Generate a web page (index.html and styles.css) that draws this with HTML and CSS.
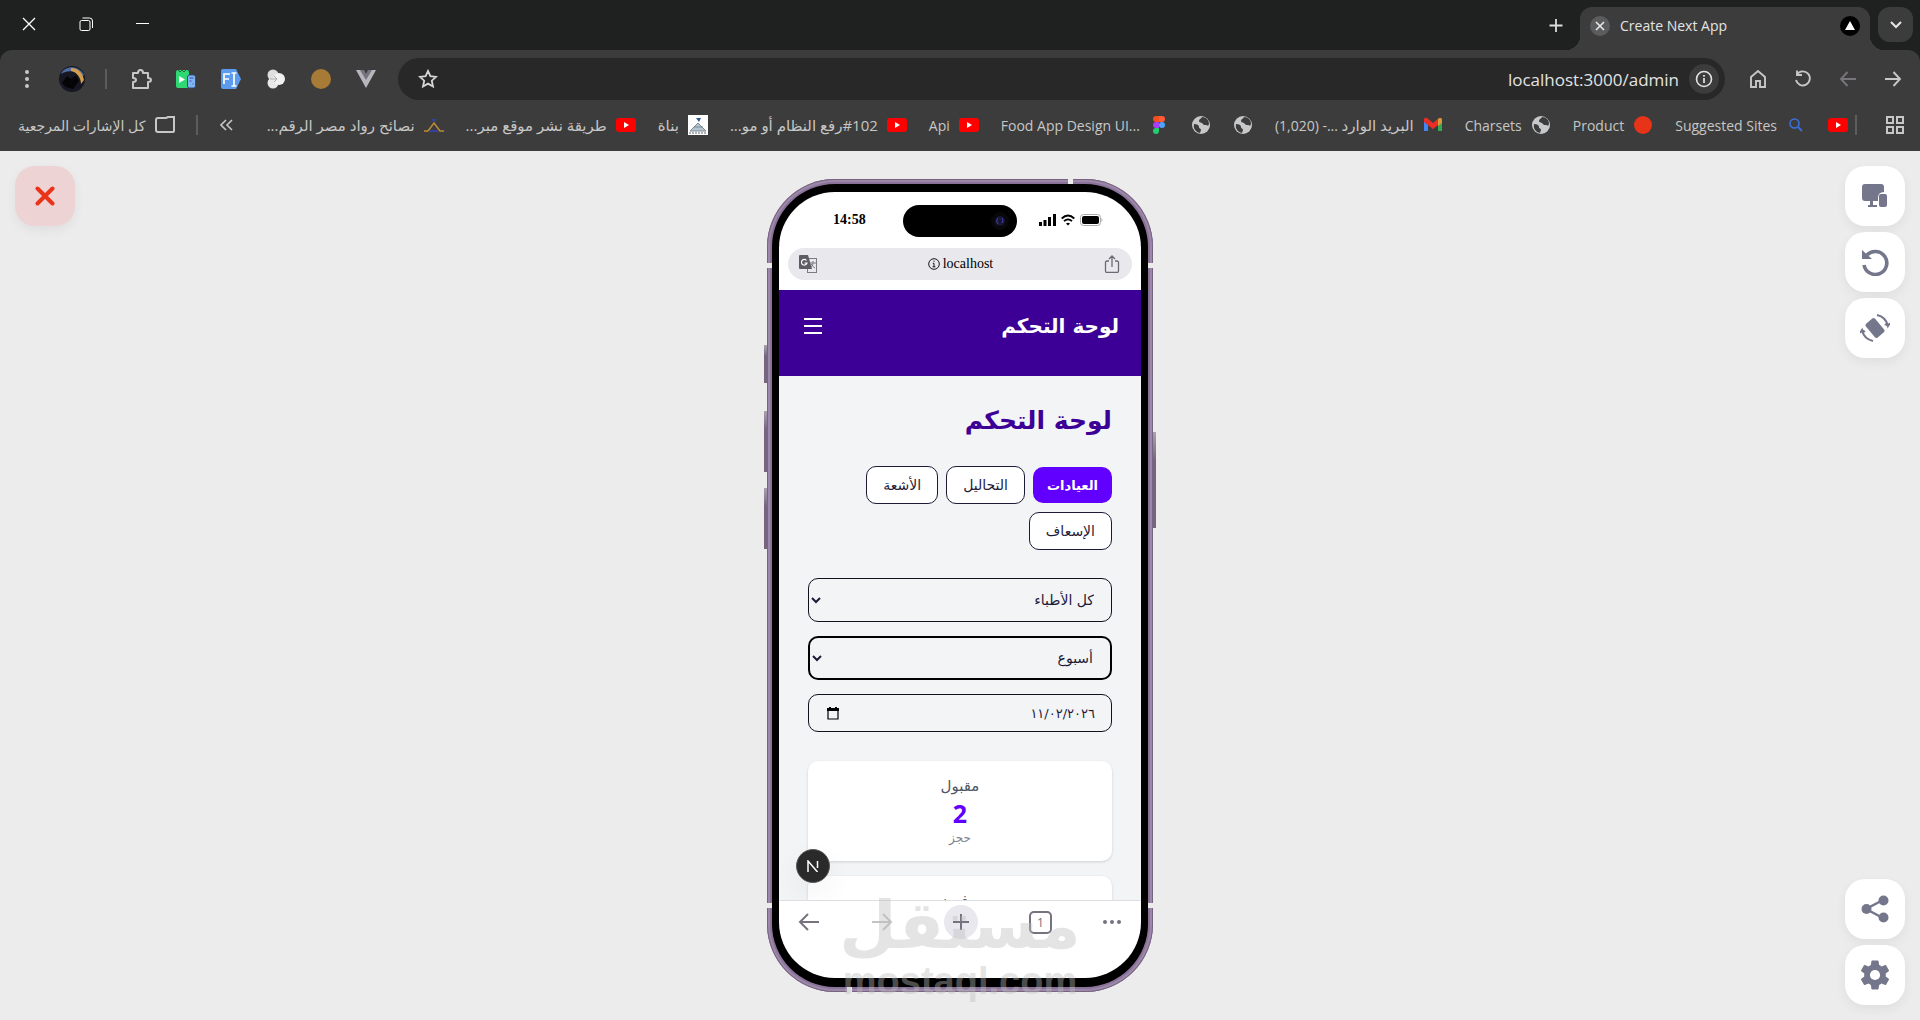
FILE: index.html
```html
<!DOCTYPE html>
<html lang="ar">
<head>
    <meta charset="UTF-8">
    <meta name="viewport" content="width=device-width, initial-scale=1.0">
    <title>Create Next App</title>
    <link rel="stylesheet" href="styles.css">
</head>
<body>
    <svg class="defs" aria-hidden="true">
        <symbol id="youtube" viewBox="0 0 20 20">
            <rect x="0" y="3" width="20" height="14" rx="3" fill="#f00"/>
            <path d="M8 7l5 3-5 3z" fill="#fff"/>
        </symbol>
        <symbol id="globe" viewBox="0 0 20 20">
            <circle cx="10" cy="10" r="9" fill="#c7c8ca"/>
            <path d="M3 9c3 0 5 1 5 3s2 1 2 3l-1 3C5 17 2 14 3 9zM11 2c-1 2-3 2-3 4s3 1 4 3 4 0 5 2l1-2c0-4-3-7-7-7z" fill="#3c3c3c"/>
        </symbol>
    </svg>

    <header class="browser">
        <div class="tabstrip">
            <div class="window-buttons">
                <button aria-label="إغلاق"><svg width="14" height="14" viewBox="0 0 14 14"><path d="M1 1l12 12M13 1L1 13" stroke="#fff" stroke-width="1.3"/></svg></button>
                <button aria-label="استعادة"><svg width="14" height="14" viewBox="0 0 14 14" fill="none" stroke="#fff"><rect x="1" y="3.500" width="10" height="10" rx="1.500"/><path d="M3.500 1h7a3 3 0 0 1 3 3v7"/></svg></button>
                <button aria-label="تصغير"><svg width="14" height="14" viewBox="0 0 14 14"><path d="M0 6.500h13" stroke="#fff"/></svg></button>
            </div>
            <div class="tabs">
                <button class="new-tab" aria-label="علامة تبويب جديدة"><svg width="14" height="14" viewBox="0 0 14 14"><path d="M7 1v13M.5 7.500h13" stroke="#dcdcdc" stroke-width="1.800"/></svg></button>
                <div class="tab">
                    <button class="tab-close" aria-label="إغلاق علامة التبويب"><svg width="10" height="10" viewBox="0 0 10 10"><path d="M1 1l8 8M9 1L1 9" stroke="#e6e6e6" stroke-width="1.700"/></svg></button>
                    <span class="tab-title">Create Next App</span>
                    <svg width="20" height="20" viewBox="0 0 20 20"><circle cx="10" cy="10" r="10" fill="#000"/><path d="M10 5l5 9H5z" fill="#fff"/></svg>
                </div>
                <button class="tab-search" aria-label="البحث في علامات التبويب"><svg width="12" height="8" viewBox="0 0 12 8"><path d="M1 1l5 5 5-5" fill="none" stroke="#e6e6e6" stroke-width="2"/></svg></button>
            </div>
        </div>

        <div class="toolbar">
            <div class="extensions">
                <button aria-label="القائمة"><svg width="20" height="20" viewBox="0 0 20 20" fill="#c7c7c7"><circle cx="10" cy="3" r="2"/><circle cx="10" cy="10" r="2"/><circle cx="10" cy="17" r="2"/></svg></button>
                <button aria-label="الملف الشخصي"><svg width="26" height="26" viewBox="0 0 26 26"><circle cx="13" cy="13" r="13" fill="#161722"/><path d="M2 8C6-1 20-1 25 9l-3 3C18 5 10 3 2 8z" fill="#4d6b9c"/><path d="M12 2c9 0 12 7 13 12l-3 4C22 12 18 6 12 5z" fill="#d59c4c"/><path d="M3 17l5-7 4 3 5-4 3 6-6 8-7-2z" fill="#050508"/></svg></button>
                <span class="divider"></span>
                <button aria-label="الإضافات"><svg width="22" height="22" viewBox="0 0 22 22"><path d="M3 5h5c0-4 5-4 5 0h5v5c4 0 4 4 0 4v6H3v-6c4 0 4-4 0-4z" fill="none" stroke="#c7c7c7" stroke-width="2" stroke-linejoin="round"/></svg></button>
                <button aria-label="مشغل الأجهزة"><svg width="22" height="22" viewBox="0 0 22 22"><rect x="1" y="2" width="13" height="18" rx="2" fill="#2fd873"/><path d="M3 2l2 2 2-2 2 2 2-2" fill="none" stroke="#1b6b41"/><path d="M4 8l6 3.500L4 15z" fill="#fff"/><rect x="12.500" y="7" width="8" height="13" rx="2" fill="#7fb4f5" stroke="#2c4b79"/><path d="M14.500 10h4M14.500 13h2m1 3h1" stroke="#4b4b9c"/></svg></button>
                <button aria-label="أداة النماذج"><svg width="22" height="22" viewBox="0 0 22 22"><path d="M3 1h13l5 10-5 10H3q-2 0-2-2V3q0-2 2-2z" fill="#5b9cf0"/><path d="M4 16V6h6M4 11h5M11.500 5h5M11.500 18h5M14 5v13" fill="none" stroke="#fff" stroke-width="1.700"/></svg></button>
                <button aria-label="ثلاث دوائر"><svg width="22" height="22" viewBox="0 0 22 22"><circle cx="8" cy="7" r="5.500" fill="#dedede"/><circle cx="8" cy="15" r="5.500" fill="#e8e8e8"/><circle cx="14" cy="11" r="6" fill="#f1f1f1"/><path d="M5 11h7M9 8l3 3-3 3" stroke="#aaa" fill="none"/></svg></button>
                <button aria-label="ملف تعريف الارتباط"><svg width="22" height="22" viewBox="0 0 22 22"><circle cx="11" cy="11" r="10" fill="#a77a35"/></svg></button>
                <button aria-label="أدوات Vue"><svg width="22" height="22" viewBox="0 0 22 22"><path d="M1 2h7l3 5 3-5h7L11 20z" fill="#b9b5bd"/><path d="M5 2h4l2 4 2-4h4l-6 10z" fill="#77737e"/></svg></button>
            </div>
            <div class="omnibox">
                <button class="star" aria-label="إضافة إشارة"><svg width="20" height="20" viewBox="0 0 20 20"><path d="M10 2l2.400 5.200 5.600.7-4.200 3.800 1.200 5.800-5-2.900-5 2.900 1.200-5.800L2 7.900l5.600-.7z" fill="none" stroke="#d6d6d6" stroke-width="1.800"/></svg></button>
                <input type="text" class="url" aria-label="العنوان" value="localhost:3000/admin">
                <button class="site-info" aria-label="معلومات الموقع"><svg width="18" height="18" viewBox="0 0 18 18"><circle cx="9" cy="9" r="7.500" fill="none" stroke="#e3e3e3" stroke-width="1.600"/><path d="M9 8v5M9 5v1.700" stroke="#e3e3e3" stroke-width="1.700"/></svg></button>
            </div>
            <div class="navigation">
                <button aria-label="الصفحة الرئيسية"><svg width="20" height="20" viewBox="0 0 20 20"><path d="M3 8l7-6 7 6v10h-5v-6H8v6H3z" fill="none" stroke="#c7c7c7" stroke-width="1.900"/></svg></button>
                <button aria-label="إعادة التحميل"><svg width="20" height="20" viewBox="0 0 20 20" fill="none" stroke="#c7c7c7" stroke-width="1.900"><path d="M4 5.500a7 7 0 1 1-1 5.500"/><path d="M4 1.500V6h5"/></svg></button>
                <button aria-label="التقدم"><svg width="20" height="20" viewBox="0 0 20 20"><path d="M18 10H3M9.500 3L3 10l6.500 7" fill="none" stroke="#77747b" stroke-width="1.900"/></svg></button>
                <button aria-label="الرجوع"><svg width="20" height="20" viewBox="0 0 20 20"><path d="M2 10h15M10.500 3l6.500 7-6.500 7" fill="none" stroke="#c7c7c7" stroke-width="1.900"/></svg></button>
            </div>
        </div>

        <nav class="bookmarks">
            <a href="#" class="bookmark all-bookmarks"><span dir="rtl">كل الإشارات المرجعية</span><svg width="22" height="18" viewBox="0 0 22 18"><path d="M2 4q0-2 2-2h8l2-1h6v14q0 1-2 1H4q-2 0-2-2z" fill="none" stroke="#c7c7c7" stroke-width="2"/></svg></a>
            <span class="divider"></span>
            <button class="more" aria-label="المزيد"><svg width="14" height="12" viewBox="0 0 14 12"><path d="M6 1L1 6l5 5M12 1L7 6l5 5" fill="none" stroke="#c7c7c7" stroke-width="1.600"/></svg></button>
            <div class="bookmark-list">
                <a href="#" class="bookmark"><span dir="rtl">نصائح رواد مصر الرقم...</span><svg width="20" height="20" viewBox="0 0 20 20"><path d="M0 16h4l6-8 6 8h4" fill="none" stroke="#b98a35" stroke-width="1.600"/><path d="M6 16h8M8 5h4" stroke="#3440a5" stroke-width="2"/></svg></a>
                <a href="#" class="bookmark"><span dir="rtl">طريقة نشر موقع مبر...</span><svg width="20" height="20"><use href="#youtube"/></svg></a>
                <a href="#" class="bookmark"><span dir="rtl">بناة</span><svg width="20" height="20" viewBox="0 0 20 20"><path d="M0 0h20v20H0z" fill="#fff"/><path d="M8 3h5l-2 4z" fill="#34579b"/><path d="M10 8L2 16h16zM6 12h9" fill="#b7c4cd" stroke="#7b8c99"/><path d="M1 18h18" stroke="#666" stroke-dasharray="2 1"/></svg></a>
                <a href="#" class="bookmark"><span dir="rtl">‎#102رفع النظام أو مو...</span><svg width="20" height="20"><use href="#youtube"/></svg></a>
                <a href="#" class="bookmark"><span>Api</span><svg width="20" height="20"><use href="#youtube"/></svg></a>
                <a href="#" class="bookmark"><span>Food App Design UI...</span><svg width="20" height="20" viewBox="0 0 20 20"><path d="M10 1H7a3 3 0 0 0 0 6h3z" fill="#f24e1e"/><path d="M10 1h3a3 3 0 0 1 0 6h-3z" fill="#ff5b37"/><path d="M10 7H7a3 3 0 0 0 0 6h3z" fill="#a93df5"/><circle cx="13" cy="10" r="3" fill="#4aa5f5"/><path d="M10 13H7a3 3 0 1 0 3 3z" fill="#24cb71"/></svg></a>
                <a href="#" class="bookmark" aria-label="موقع"><svg width="20" height="20"><use href="#globe"/></svg></a>
                <a href="#" class="bookmark" aria-label="موقع"><svg width="20" height="20"><use href="#globe"/></svg></a>
                <a href="#" class="bookmark"><span dir="ltr">(1,020) -... <bdi>البريد الوارد</bdi></span><svg width="20" height="20" viewBox="0 0 20 20"><path d="M1 4v12h4V8z" fill="#4285f4"/><path d="M19 4v12h-4V8z" fill="#34a853"/><path d="M1 4c1-2 3-1 3-1l6 5 6-5s2-1 3 1v3l-9 7-9-7z" fill="#ea2d25"/><path d="M15 4c2-2 4-1 4 1v3l-4 3z" fill="#d29b3c"/></svg></a>
                <a href="#" class="bookmark"><span>Charsets</span><svg width="20" height="20"><use href="#globe"/></svg></a>
                <a href="#" class="bookmark"><span>Product</span><svg width="20" height="20" viewBox="0 0 20 20"><circle cx="10" cy="10" r="9" fill="#e73419"/></svg></a>
                <a href="#" class="bookmark"><span>Suggested Sites</span><svg width="20" height="20" viewBox="0 0 20 20"><circle cx="8.500" cy="8.500" r="4.500" fill="none" stroke="#3b70dc" stroke-width="1.600"/><path d="M12 12l4 4" stroke="#3b70dc" stroke-width="1.800"/></svg></a>
                <a href="#" class="bookmark" aria-label="YouTube"><svg width="20" height="20"><use href="#youtube"/></svg></a>
            </div>
            <span class="divider"></span>
            <button class="apps" aria-label="التطبيقات"><svg width="18" height="18" viewBox="0 0 18 18" fill="none" stroke="#c7c7c7" stroke-width="2"><rect x="1" y="1" width="6" height="6"/><rect x="11" y="1" width="6" height="6"/><rect x="1" y="11" width="6" height="6"/><rect x="11" y="11" width="6" height="6"/></svg></button>
        </nav>
    </header>

    <main class="stage">
        <div class="tools">
            <button class="tool tool-close" aria-label="إغلاق المحاكي"><svg width="20" height="20" viewBox="0 0 20 20"><path d="M2.500 2.500l15 15M17.500 2.500l-15 15" stroke="#e93419" stroke-width="4" stroke-linecap="round"/></svg></button>
        </div>

        <div class="phone">
            <span class="side-key key-action"></span>
            <span class="side-key key-up"></span>
            <span class="side-key key-down"></span>
            <span class="side-key key-power"></span>
            <span class="antenna antenna-top"></span>
            <span class="antenna antenna-upper-left"></span>
            <span class="antenna antenna-upper-right"></span>
            <span class="antenna antenna-lower-left"></span>
            <span class="antenna antenna-lower-right"></span>
            <span class="antenna antenna-bottom"></span>
            <div class="bezel">
                <div class="screen">
                    <div class="status-bar">
                        <span class="clock">14:58</span>
                        <span class="island"><svg width="20" height="20" viewBox="0 0 20 20"><circle cx="10" cy="10" r="9" fill="#08080b"/><circle cx="10" cy="10" r="5" fill="#171637"/><path d="M8 7q-3 3 0 6M12 7q2 2 0 5" stroke="#4440a0" fill="none"/></svg></span>
                        <span class="signals">
                            <svg width="17" height="12" viewBox="0 0 17 12"><path d="M0 8h3v4H0zM4.500 6h3v6h-3zM9 3h3v9H9zM14 0h3v12h-3z"/></svg>
                            <svg width="14" height="12" viewBox="0 0 14 12" fill="none" stroke="#000" stroke-width="1.800"><path d="M.7 4.500q6.300-6 12.600 0M3 7.200q4-3.600 8 0"/><path d="M5 9.500q2-1.500 4 0L7 11.500z" fill="#000" stroke="none"/></svg>
                            <svg width="23" height="12" viewBox="0 0 23 12"><rect x=".5" y=".5" width="20" height="11" rx="3" fill="none" stroke="#aaa"/><rect x="2" y="2" width="17" height="8" rx="2"/><path d="M21.500 4q2 2 0 4z" fill="#aaa"/></svg>
                        </span>
                    </div>
                    <div class="address">
                        <svg width="18" height="18" viewBox="0 0 18 18"><rect x="8.500" y="3.500" width="9" height="14" fill="none" stroke="#7c7a82"/><path d="M11 8h6M14 6v2c0 3-2 4-3 5m1-4q2 3 4 4" fill="none" stroke="#7c7a82"/><path d="M1 0h8l4 14H1q-1 0-1-1V1q0-1 1-1z" fill="#5d5b63"/><path d="M7.500 5.500A2.800 2.800 0 1 0 8 8H5.500" fill="none" stroke="#fff" stroke-width="1.200"/></svg>
                        <span class="host"><svg width="12" height="12" viewBox="0 0 12 12"><circle cx="6" cy="6" r="5.300" fill="none" stroke="#000" stroke-width=".9"/><path d="M6 2.600v1.200M4.800 5.300H6v3.500M4.600 8.800h2.800" fill="none" stroke="#000" stroke-width=".9"/></svg>localhost</span>
                        <svg width="16" height="18" viewBox="0 0 16 18" fill="none" stroke="#6d6a75" stroke-width="1.300"><path d="M5 6H3Q1.500 6 1.500 7.500V16q0 1.500 1.500 1.500h10q1.500 0 1.500-1.500V7.500Q14.500 6 13 6h-2M8 12V1M5 4l3-3 3 3"/></svg>
                    </div>

                    <div class="app" dir="rtl">
                        <div class="app-header">
                            <span class="brand">لوحة التحكم</span>
                            <button class="menu" aria-label="القائمة"><svg width="18" height="16" viewBox="0 0 18 16"><path d="M0 1h18M0 8h18M0 15h18" stroke="#fff" stroke-width="2"/></svg></button>
                        </div>
                        <div class="app-body">
                            <h1>لوحة التحكم</h1>
                            <div class="sections">
                                <button class="section active">العيادات</button>
                                <button class="section">التحاليل</button>
                                <button class="section">الأشعة</button>
                                <button class="section">الإسعاف</button>
                            </div>
                            <div class="filters">
                                <select aria-label="الطبيب">
                                    <option>كل الأطباء</option>
                                </select>
                                <select class="focused" aria-label="الفترة">
                                    <option>أسبوع</option>
                                </select>
                                <label class="date">
                                    <input type="text" aria-label="التاريخ" value="١١/٠٢/٢٠٢٦">
                                    <svg width="12" height="13" viewBox="0 0 12 13"><path d="M1 2h10v10H1z" fill="none" stroke="#000" stroke-width="1.200"/><path d="M0 1h12v3H0zM2 0h2v2H2zM8 0h2v2H8z"/></svg>
                                </label>
                            </div>
                            <div class="card">
                                <span class="card-label">مقبول</span>
                                <strong>2</strong>
                                <small>حجز</small>
                            </div>
                            <div class="card">
                                <span class="card-label">مرفوض</span>
                            </div>
                        </div>
                        <button class="next-badge" aria-label="Next.js"><svg width="12" height="12" viewBox="0 0 12 12"><path d="M1 12V1l9.500 11M10.500 1v7" fill="none" stroke="#fff" stroke-width="1.500"/></svg></button>
                    </div>

                    <div class="phone-nav">
                        <button aria-label="السابق"><svg width="22" height="18" viewBox="0 0 22 18"><path d="M21 9H2M10 1L2 9l8 8" fill="none" stroke="#77727f" stroke-width="2"/></svg></button>
                        <button aria-label="التالي"><svg width="22" height="18" viewBox="0 0 22 18"><path d="M1 9h19M12 1l8 8-8 8" fill="none" stroke="#c4c3c7" stroke-width="2"/></svg></button>
                        <button class="plus" aria-label="إضافة"><svg width="16" height="16" viewBox="0 0 16 16"><path d="M8 0v16M0 8h16" stroke="#77727f" stroke-width="2"/></svg></button>
                        <button aria-label="علامات التبويب"><span class="count">1</span></button>
                        <button aria-label="خيارات"><svg width="18" height="4" viewBox="0 0 18 4" fill="#77727f"><circle cx="2" cy="2" r="2"/><circle cx="9" cy="2" r="2"/><circle cx="16" cy="2" r="2"/></svg></button>
                    </div>
                </div>
            </div>
            <div class="watermark">
                <span class="watermark-name">مستقل</span>
                <span class="watermark-site">mostaql.com</span>
            </div>
        </div>

        <div class="tools">
            <button class="tool" aria-label="الأجهزة"><svg width="28" height="26" viewBox="0 0 28 26" fill="#74768b"><path d="M4 1h16q3 0 3 3v5q-6 0-6 6v3H4q-3 0-3-3V4q0-3 3-3z"/><path d="M9 18h3v4h4v2H7v-2h2z"/><rect x="18" y="11" width="8" height="13" rx="2"/></svg></button>
            <button class="tool" aria-label="تحديث"><svg width="28" height="28" viewBox="0 0 28 28" fill="none" stroke="#74768b" stroke-width="3.600"><path d="M6 7a11.500 11.500 0 1 1-3 10"/><path d="M1 2v9h10z" fill="#74768b" stroke="none"/></svg></button>
            <button class="tool" aria-label="تدوير"><svg width="30" height="30" viewBox="0 0 30 30"><rect x="9" y="6" width="12" height="18" rx="2" fill="#74768b" transform="rotate(-40 15 15)"/><path d="M17 2q9 2 11 11l2-3m-2 3l-3-2M13 28Q4 26 2 17l-2 3m2-3l3 2" fill="none" stroke="#74768b" stroke-width="2"/></svg></button>
            <button class="tool share" aria-label="مشاركة"><svg width="28" height="28" viewBox="0 0 28 28" fill="#74768b"><path d="M22 5L5 14l17 9" fill="none" stroke="#74768b" stroke-width="2.500"/><circle cx="22.500" cy="5.500" r="5"/><circle cx="5.500" cy="14" r="5"/><circle cx="22.500" cy="22.500" r="5"/></svg></button>
            <button class="tool" aria-label="الإعدادات"><svg width="36" height="36" viewBox="0 0 24 24"><path d="M19.140 12.940c.04-.3.060-.61.060-.94s-.02-.64-.07-.94l2.030-1.580a.49.49 0 0 0 .12-.61l-1.920-3.320a.49.49 0 0 0-.59-.22l-2.390.96a7 7 0 0 0-1.620-.94l-.36-2.540a.48.48 0 0 0-.48-.41h-3.840a.48.48 0 0 0-.47.41l-.36 2.540c-.59.24-1.130.57-1.620.94l-2.390-.96a.48.48 0 0 0-.59.22L2.740 8.870a.48.48 0 0 0 .12.61l2.030 1.580c-.05.3-.09.63-.09.94s.02.64.07.94l-2.030 1.580a.49.49 0 0 0-.12.61l1.920 3.320c.12.22.37.29.59.22l2.390-.96c.5.38 1.030.7 1.620.94l.36 2.540c.05.24.24.41.48.41h3.840c.24 0 .44-.17.47-.41l.36-2.540c.59-.24 1.130-.56 1.620-.94l2.390.96c.22.08.47 0 .59-.22l1.920-3.320a.47.47 0 0 0-.12-.61z" fill="#74768b"/><circle cx="12" cy="12" r="3.400" fill="#fff"/></svg></button>
        </div>
    </main>
</body>
</html>
```

FILE: styles.css
```css
* {
    box-sizing: border-box;
}

body {
    font-family: "Open Sans", "DejaVu Sans", sans-serif;
    background-color: #ececec;
    display: flex;
    flex-direction: column;
    min-height: 100vh;
    margin: 0;
}

button {
    background: none;
    border: none;
    padding: 0;
    font: inherit;
    color: inherit;
    cursor: pointer;
    display: flex;
    align-items: center;
    justify-content: center;
}

a {
    color: inherit;
    text-decoration: none;
}

svg {
    display: block;
    flex-shrink: 0;
}

.defs {
    position: absolute;
    width: 0;
    height: 0;
}

/* Browser window */
.browser {
    background-color: #1f2120;
    color: #c7c7c7;
    font-size: 14px;
}

.tabstrip {
    display: flex;
    justify-content: space-between;
    height: 50px;
}

.window-buttons {
    display: flex;
    padding-bottom: 2px;
}

.window-buttons button {
    width: 57px;
}

.tabs {
    display: flex;
    padding: 7px 7px 0 0;
}

.new-tab {
    width: 48px;
    height: 36px;
}

.tab {
    position: relative;
    display: flex;
    align-items: center;
    gap: 10px;
    width: 290px;
    padding: 0 10px 6px;
    background-color: #3c3c3c;
    border-radius: 12px 12px 0 0;
    color: #e3e3e3;
}

.tab::before,
.tab::after {
    content: "";
    position: absolute;
    bottom: 0;
    width: 14px;
    height: 14px;
}

.tab::before {
    right: 100%;
    background: radial-gradient(circle at 0 0, transparent 14px, #3c3c3c 14px);
}

.tab::after {
    left: 100%;
    background: radial-gradient(circle at 100% 0, transparent 14px, #3c3c3c 14px);
}

.tab-title {
    flex: 1;
}

.tab-close {
    width: 20px;
    height: 20px;
    border-radius: 50%;
    background-color: #5b5c5e;
}

.tab-search {
    width: 35px;
    height: 35px;
    margin-left: 8px;
    border-radius: 12px;
    background-color: #3c3c3c;
}

.toolbar {
    display: flex;
    align-items: center;
    height: 58px;
    background-color: #3c3c3c;
    border-radius: 12px 12px 0 0;
}

.extensions {
    display: flex;
    align-items: center;
    padding-left: 4px;
}

.extensions button,
.navigation button {
    width: 45px;
    height: 40px;
}

.divider {
    width: 2px;
    height: 20px;
    background-color: #5d5d60;
}

.extensions .divider {
    margin: 0 11px;
}

.omnibox {
    display: flex;
    align-items: center;
    flex: 1;
    height: 42px;
    margin: 0 10px;
    padding: 0 6px 0 20px;
    background-color: #282828;
    border-radius: 21px;
}

.url {
    flex: 1;
    min-width: 0;
    border: none;
    background: none;
    color: #e3e3e3;
    font-family: "Open Sans", sans-serif;
    font-size: 17px;
    text-align: right;
    padding: 0 10px;
}

.site-info {
    width: 30px;
    height: 30px;
    border-radius: 50%;
    background-color: #3c3c3c;
}

.navigation {
    display: flex;
    padding-right: 5px;
}

.bookmarks {
    display: flex;
    align-items: center;
    height: 43px;
    padding: 0 16px 9px 18px;
    background-color: #3c3c3c;
    white-space: nowrap;
}

.bookmark {
    display: flex;
    align-items: center;
    gap: 9px;
}

.bookmark span[dir="rtl"],
.bookmark bdi {
    font-size: 15px;
}

.all-bookmarks span[dir="rtl"] {
    font-size: 14px;
}

.bookmarks > .divider {
    margin-left: 20px;
}

.more {
    margin-left: 22px;
}

.bookmark-list {
    display: flex;
    flex: 1;
    justify-content: flex-end;
    gap: 22px;
}

.bookmarks > .bookmark-list + .divider {
    margin-left: 7px;
}

.apps {
    margin-left: 29px;
}

/* Emulator */
.stage {
    flex: 1;
    display: flex;
    justify-content: space-between;
    padding: 15px;
}

.tools {
    display: flex;
    flex-direction: column;
    gap: 6px;
    width: 60px;
}

.tool {
    width: 60px;
    height: 60px;
    background-color: #fff;
    border-radius: 20px;
    box-shadow: 0 4px 12px rgba(0, 0, 0, 0.06);
}

.tool-close {
    background-color: #eed3d4;
}

.share {
    margin-top: auto;
}

.phone {
    position: relative;
    display: flex;
    width: 386px;
    margin: 13px 0;
    padding: 5px;
    border-radius: 68px;
    background-color: #8a7398;
    box-shadow: inset 0 0 0 1px #77647f, inset 0 0 0 3px #9d88aa;
}

.bezel {
    display: flex;
    flex: 1;
    min-width: 0;
    padding: 8px 7px 9px;
    border-radius: 63px;
    background-color: #000;
}

.side-key {
    position: absolute;
    width: 3px;
    background: linear-gradient(#aaa1b0, #77647f 30%);
}

.key-action {
    left: -3px;
    top: 166px;
    height: 38px;
}

.key-up {
    left: -3px;
    top: 232px;
    height: 61px;
}

.key-down {
    left: -3px;
    top: 309px;
    height: 61px;
}

.key-power {
    right: -3px;
    top: 253px;
    height: 96px;
}

.antenna {
    position: absolute;
    width: 5px;
    height: 5px;
    background-color: #ececec;
}

.antenna-top {
    top: 0;
    right: 80px;
}

.antenna-bottom {
    bottom: 0;
    left: 80px;
}

.antenna-upper-left {
    left: 0;
    top: 84px;
}

.antenna-upper-right {
    right: 0;
    top: 84px;
}

.antenna-lower-left {
    left: 0;
    bottom: 84px;
}

.antenna-lower-right {
    right: 0;
    bottom: 84px;
}

.screen {
    display: flex;
    flex-direction: column;
    flex: 1;
    min-width: 0;
    overflow: hidden;
    border-radius: 56px;
    background-color: #fff;
    font-family: "Liberation Serif", serif;
    font-size: 14px;
}

.status-bar {
    display: grid;
    grid-template-columns: 1fr 114px 1fr;
    align-items: center;
    height: 56px;
    padding-top: 2px;
}

.clock {
    font-weight: bold;
    padding: 0 0 2px 54px;
}

.island {
    display: flex;
    align-items: center;
    justify-content: flex-end;
    height: 32px;
    padding-right: 7px;
    border-radius: 16px;
    background-color: #000;
}

.signals {
    display: flex;
    gap: 5px;
    padding: 0 0 2px 22px;
}

.address {
    display: flex;
    align-items: center;
    justify-content: space-between;
    height: 32px;
    margin: 0 9px 10px;
    padding: 0 12px 0 11px;
    border-radius: 16px;
    background-color: #e9e8ed;
}

.host {
    display: flex;
    align-items: center;
    gap: 3px;
}

/* Dashboard */
.app {
    position: relative;
    display: flex;
    flex-direction: column;
    height: 610px;
    overflow: hidden;
    font-family: "DejaVu Sans", sans-serif;
    background-color: #f3f4f6;
}

.app-header {
    display: flex;
    flex-shrink: 0;
    align-items: flex-start;
    justify-content: space-between;
    height: 86px;
    padding: 22px 22px 0 25px;
    background-color: #3c0096;
    color: #fff;
}

.brand {
    font-size: 20px;
    font-weight: bold;
    line-height: 28px;
}

.menu {
    height: 28px;
}

.app-body {
    padding: 24px 29px;
}

h1 {
    margin: 0 0 24px;
    color: #3c0096;
    font-size: 25px;
    line-height: 42px;
}

.sections {
    display: flex;
    flex-wrap: wrap;
    align-items: center;
    gap: 8px;
}

.section {
    height: 38px;
    padding: 0 16px;
    border: 1px solid #1e1b39;
    border-radius: 10px;
    background-color: #fff;
    color: #1e1b39;
    font-size: 14px;
}

.section.active {
    height: 36px;
    padding: 0 14px;
    border: none;
    background-color: #6200ff;
    color: #fff;
    font-size: 13px;
    font-weight: bold;
}

.filters {
    display: flex;
    flex-direction: column;
    gap: 14px;
    margin: 28px 0 29px;
}

select,
.date {
    height: 44px;
    border: 1px solid #11101f;
    border-radius: 10px;
    background-color: #f3f4f6;
    color: #1e1b39;
    font-family: "DejaVu Sans", sans-serif;
    font-size: 14px;
}

select {
    width: 100%;
    padding: 0 13px;
}

select.focused {
    border: 2px solid #000;
}

.date {
    display: flex;
    align-items: center;
    height: 38px;
    padding: 0 16px 0 18px;
    font-size: 13px;
}

.date input {
    flex: 1;
    min-width: 0;
    padding: 0;
    border: none;
    background: none;
    color: inherit;
    font: inherit;
}

.card {
    display: flex;
    flex-direction: column;
    align-items: center;
    height: 100px;
    margin-bottom: 15px;
    padding: 13px;
    border-radius: 10px;
    background-color: #fff;
    box-shadow: 0 1px 3px rgba(0, 0, 0, 0.15);
    color: #4a5565;
}

.card-label {
    font-size: 15px;
    line-height: 24px;
}

.card strong {
    color: #6200ff;
    font-family: "Open Sans", sans-serif;
    font-size: 25px;
    line-height: 30px;
}

.card small {
    color: #7b828f;
    font-size: 12px;
    line-height: 20px;
}

.next-badge {
    position: absolute;
    left: 17px;
    bottom: 17px;
    width: 34px;
    height: 34px;
    border: 1px solid #5a5a5a;
    border-radius: 50%;
    background-color: #2a2a2a;
    box-shadow: 0 12px 30px rgba(0, 0, 0, 0.06);
}

.phone-nav {
    display: flex;
    justify-content: space-between;
    align-items: flex-start;
    flex: 1;
    padding: 4px 20px 0 19px;
    border-top: 1px solid #dedee2;
    color: #77727f;
}

.phone-nav button {
    height: 34px;
}

.phone-nav .plus {
    width: 34px;
    border-radius: 50%;
    background-color: #e9e8ef;
}

.count {
    width: 23px;
    height: 23px;
    border: 2px solid #77727f;
    border-radius: 5px;
    font-family: "Open Sans", sans-serif;
    font-size: 12px;
    line-height: 19px;
}

.watermark {
    position: absolute;
    left: 50%;
    bottom: -8px;
    display: flex;
    flex-direction: column;
    align-items: center;
    transform: translateX(-50%);
    color: #bdbdbd;
    opacity: 0.4;
    font-weight: bold;
    pointer-events: none;
}

.watermark-name {
    font-family: "DejaVu Sans", sans-serif;
    font-size: 66px;
    line-height: 72px;
}

.watermark-site {
    font-family: "Liberation Sans", sans-serif;
    font-size: 38px;
    line-height: 38px;
}
```
